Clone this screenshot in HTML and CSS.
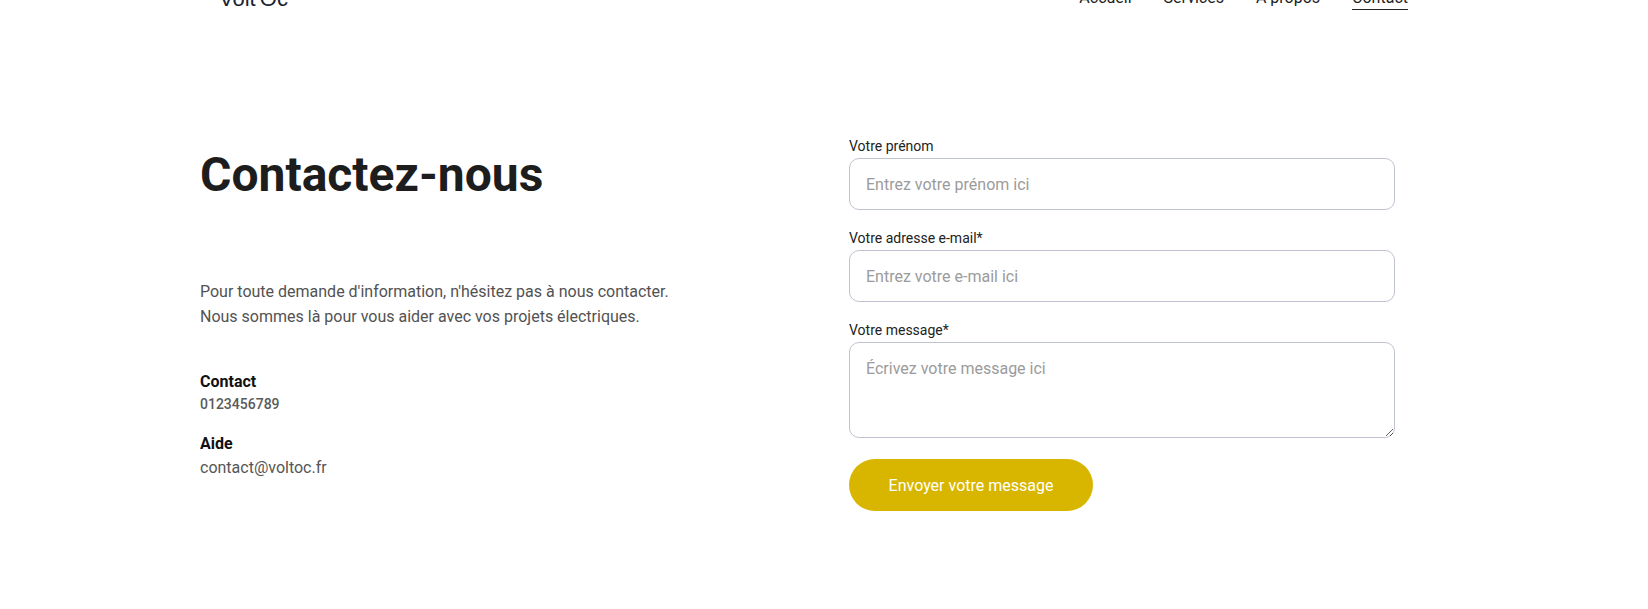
FILE: index.html
```html
<!DOCTYPE html>
<html lang="fr">
<head>
<meta charset="utf-8">
<title>Contact - VoltOc</title>
<link rel="stylesheet" href="styles.css">
</head>
<body>
<header class="site-header">
  <a class="logo" href="#">Volt Oc</a>
  <nav class="nav">
    <a href="#">Accueil</a>
    <a href="#">Services</a>
    <a href="#">À propos</a>
    <a href="#" class="active">Contact</a>
  </nav>
</header>
<main class="contact">
  <section class="intro">
    <h1>Contactez-nous</h1>
    <p class="lead">Pour toute demande d'information, n'hésitez pas à nous contacter.<br>Nous sommes là pour vous aider avec vos projets électriques.</p>
    <div class="info">
      <h3>Contact</h3>
      <p class="phone">0123456789</p>
    </div>
    <div class="info">
      <h3>Aide</h3>
      <p class="mail">contact@voltoc.fr</p>
    </div>
  </section>
  <form class="form">
    <div class="field">
      <label for="prenom">Votre prénom</label>
      <input id="prenom" type="text" placeholder="Entrez votre prénom ici">
    </div>
    <div class="field">
      <label for="email">Votre adresse e-mail*</label>
      <input id="email" type="email" placeholder="Entrez votre e-mail ici">
    </div>
    <div class="field">
      <label for="msg">Votre message*</label>
      <textarea id="msg" placeholder="Écrivez votre message ici"></textarea>
    </div>
    <button type="button" class="submit">Envoyer votre message</button>
  </form>
</main>
</body>
</html>
```
FILE: styles.css
```css
* { box-sizing: border-box; }
html, body { margin: 0; padding: 0; background: #fff; }
body {
  font-family: Roboto, "Noto Sans", Arial, sans-serif;
  color: #1f1f1f;
  height: 609px;
  overflow: hidden;
}
.site-header {
  display: flex;
  justify-content: space-between;
  align-items: flex-start;
  padding: 0 240px 0 219px;
  margin-top: -14px;
  height: 24px;
}
.logo {
  font-family: "Liberation Sans", Arial, sans-serif;
  font-size: 22px;
  line-height: 24px;
  margin-top: 0.5px;
  color: #1c2433;
  text-decoration: none;
  word-spacing: -2px;
}
.nav {
  display: flex;
  gap: 32px;
  margin-top: 1.5px;
}
.nav a {
  font-size: 16px;
  line-height: 20px;
  color: #222;
  text-decoration: none;
  padding-bottom: 1px;
  border-bottom: 1.5px solid transparent;
}
.nav a.active { border-bottom-color: #222; }

.contact {
  display: grid;
  grid-template-columns: 649px 546px;
  padding: 123px 0 0 200px;
}
.intro h1 {
  margin: 13px 0 0;
  font-size: 48px;
  line-height: 57.6px;
  font-weight: 700;
  color: #1d1d1d;
}
.lead {
  margin: 75px 0 0;
  font-size: 16px;
  line-height: 25px;
  color: #525252;
}
.info { margin-top: 17px; }
.lead + .info { margin-top: 41px; }
.info h3 {
  margin: 0;
  font-size: 16px;
  line-height: 24px;
  font-weight: 700;
  color: #111;
}
.phone {
  margin: 0;
  font-size: 14px;
  line-height: 21px;
  font-weight: 500;
  color: #5a5a5a;
}
.mail {
  margin: 0;
  font-size: 16px;
  line-height: 24px;
  color: #555;
}

.form {
  display: flex;
  flex-direction: column;
  gap: 18px;
  margin-top: 3px;
}
.field { display: flex; flex-direction: column; }
.field label {
  font-size: 14px;
  line-height: 21px;
  color: #222;
  margin-bottom: 1px;
}
.field input, .field textarea {
  font-family: Roboto, "Noto Sans", Arial, sans-serif;
  font-size: 16px;
  color: #222;
  border: 1px solid #bfc3cf;
  border-radius: 10px;
  padding: 0 16px;
  background: #fff;
  outline: none;
}
.field input { height: 52px; }
.field textarea {
  height: 96px;
  padding: 14px 16px;
  line-height: 24px;
  resize: vertical;
}
.field input::placeholder, .field textarea::placeholder { color: #9b9b9b; opacity: 1; }
.submit {
  align-self: flex-start;
  margin-top: 3px;
  width: 244px;
  height: 52px;
  border: none;
  border-radius: 26px;
  background: #d8b600;
  color: #fff;
  font-family: Roboto, "Noto Sans", Arial, sans-serif;
  font-size: 16px;
  font-weight: 400;
  cursor: pointer;
}
```
